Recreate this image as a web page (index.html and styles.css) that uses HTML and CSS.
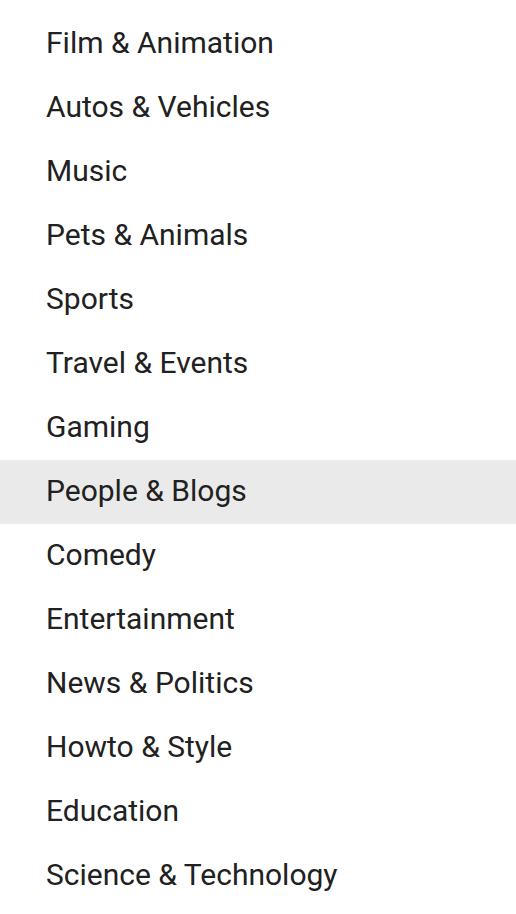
FILE: index.html
```html
<!DOCTYPE html>
<html>
<head>
  <meta charset="UTF-8">
  <link rel="stylesheet" href="styles.css">
</head>
<body>
  <ul class="category-list">
    <li class="category-item">Film &amp; Animation</li>
    <li class="category-item">Autos &amp; Vehicles</li>
    <li class="category-item">Music</li>
    <li class="category-item">Pets &amp; Animals</li>
    <li class="category-item">Sports</li>
    <li class="category-item">Travel &amp; Events</li>
    <li class="category-item">Gaming</li>
    <li class="category-item selected">People &amp; Blogs</li>
    <li class="category-item">Comedy</li>
    <li class="category-item">Entertainment</li>
    <li class="category-item">News &amp; Politics</li>
    <li class="category-item">Howto &amp; Style</li>
    <li class="category-item">Education</li>
    <li class="category-item">Science &amp; Technology</li>
  </ul>
</body>
</html>
```

FILE: styles.css
```css
body {
  margin: 0;
  background-color: #fff;
  font-family: Roboto, "Liberation Sans", sans-serif;
}

.category-list {
  list-style: none;
  margin: 0;
  padding: 12px 0 0;
}

.category-item {
  display: flex;
  align-items: center;
  height: 64px;
  box-sizing: border-box;
  padding: 0 46px 4px;
  font-size: 30px;
  color: #212121;
}

.category-item.selected {
  background-color: #eaeaea;
}
```
